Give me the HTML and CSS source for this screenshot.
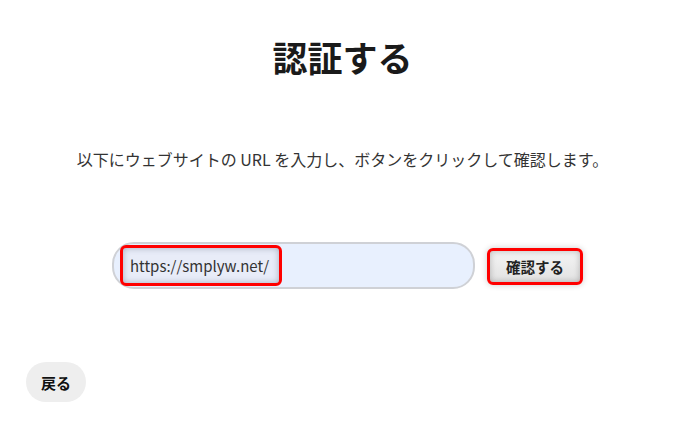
FILE: index.html
```html
<!DOCTYPE html>
<html lang="ja">
  <head>
    <meta charset="UTF-8" />
    <meta name="viewport" content="width=device-width, initial-scale=1.0" />
    <title>認証する</title>
    <link rel="stylesheet" href="styles.css">
  </head>
  <body>
    <div class="page">
      <h1>認証する</h1>
      <p class="lead">以下にウェブサイトの URL を入力し、ボタンをクリックして確認します。</p>

      <form class="verify-form">
        <div class="url-field">
          <span class="url-value mark">https://smplyw.net/</span>
        </div>
        <button type="button" class="verify-btn mark">確認する</button>
      </form>

      <div class="back-row">
        <button type="button" class="back-btn">戻る</button>
      </div>
    </div>
  </body>
</html>
```

FILE: styles.css
```css
body {
  margin: 0;
  font-family: "Noto Sans CJK JP", "Noto Sans", sans-serif;
  background-color: #fff;
  color: #222;
}
.page {
  width: 685px;
  height: 422px;
  box-sizing: border-box;
  padding-top: 32px;
}
h1 {
  margin: 0;
  text-align: center;
  font-size: 35px;
  line-height: 50px;
  font-weight: 700;
  color: #1a1a1a;
}
.lead {
  margin: 65px 0 0;
  text-align: center;
  font-size: 16px;
  line-height: 24px;
  color: #333;
}

.verify-form {
  display: flex;
  align-items: flex-start;
  gap: 12px;
  margin: 71px 0 0 112px;
}
.url-field {
  width: 363px;
  height: 47px;
  box-sizing: border-box;
  border: 2px solid #cfd1d6;
  border-radius: 22px;
  background-color: #e8f0fe;
  padding: 1px 0 0 6px;
}
.mark {
  border: 3.5px solid #f00;
  border-radius: 6px;
}
.url-value {
  display: flex;
  align-items: center;
  width: 162px;
  height: 41px;
  box-sizing: border-box;
  padding-left: 7px;
  font-size: 15px;
  color: #333;
  background-color: #e8ecf8;
  box-shadow: inset 0 0 6px rgba(80, 90, 120, 0.45);
}
.verify-btn {
  width: 96px;
  height: 37px;
  margin-top: 6px;
  padding: 0;
  font-family: inherit;
  font-size: 14.5px;
  font-weight: 700;
  color: #222;
  background: linear-gradient(#f4f4f4, #e2e2e2);
  box-shadow: inset 0 0 6px rgba(0, 0, 0, 0.25), 0 0 6px rgba(0, 0, 0, 0.2);
}

.back-row {
  margin: 73px 0 0 26px;
}
.back-btn {
  width: 60px;
  height: 40px;
  border: none;
  border-radius: 20px;
  background-color: #eee;
  font-family: inherit;
  font-size: 15px;
  font-weight: 700;
  color: #111;
  padding: 0;
}
```
